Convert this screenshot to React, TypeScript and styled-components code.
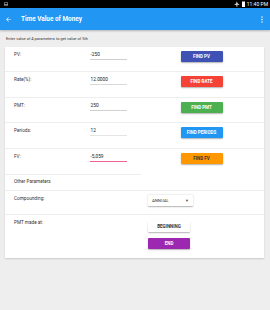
import React from "react";
import styled, { createGlobalStyle } from "styled-components";

const Global = createGlobalStyle`
  html, body { margin: 0; padding: 0; background: #eeeeee; }
  body { font-family: Roboto, "Liberation Sans", sans-serif; }
  * { box-sizing: border-box; }
`;

const Screen = styled.div`
  width: 270px;
  height: 310px;
  background: #eeeeee;
  display: flex;
  flex-direction: column;
  overflow: hidden;
`;

const StatusBar = styled.div`
  height: 8px;
  background: #000;
  display: flex;
  align-items: center;
  justify-content: space-between;
  padding: 0 2px 0 4px;
  color: #fff;
`;

const StatusRight = styled.div`
  display: flex;
  align-items: center;
  gap: 2px;
`;

const Clock = styled.span`
  font-size: 5px;
  line-height: 8px;
  color: #fff;
`;

const AppBar = styled.div`
  height: 22px;
  background: #2196f3;
  display: flex;
  align-items: center;
  padding: 0 7px 0 5px;
  box-shadow: 0 1px 2px rgba(0, 0, 0, 0.25);
  color: #fff;
`;

const Title = styled.div`
  font-size: 6.4px;
  font-weight: 700;
  margin-left: 9px;
  flex: 1;
`;

const Intro = styled.div`
  font-size: 4px;
  line-height: 6px;
  color: #333;
  padding: 6px 6px 5px;
`;

const Card = styled.div`
  margin: 0 6px 0 5px;
  background: #fff;
  box-shadow: 0 1px 1.5px rgba(0, 0, 0, 0.15);
  display: flex;
  flex-direction: column;
`;

const Row = styled.div<{ $h: number; $line?: boolean }>`
  height: ${(p) => p.$h}px;
  display: grid;
  grid-template-columns: 74px 40px 1fr;
  align-items: start;
  padding: 4px 9px 0;
  border-bottom: ${(p) => (p.$line === false ? "none" : "1px solid #eeeeee")};
`;

const ShortRow = styled(Row)`
  position: relative;
  &::after {
    content: "";
    position: absolute;
    left: 0;
    bottom: 0;
    width: 136px;
    height: 1px;
    background: #eeeeee;
  }
`;

const Label = styled.div<{ $lh?: number }>`
  font-size: 4.7px;
  line-height: ${(p) => p.$lh || 8}px;
  color: #333;
`;

const Input = styled.div<{ $line: string }>`
  justify-self: center;
  width: 37px;
  height: 9px;
  font-size: 4.8px;
  line-height: 8px;
  color: #222;
  padding-left: 1px;
  border-bottom: 1px solid ${(p) => p.$line};
`;

const Cell = styled.div<{ $align?: string }>`
  padding-left: 20px;
  display: flex;
  flex-direction: column;
  align-items: ${(p) => p.$align || "center"};
  gap: 6px;
`;

const Btn = styled.div<{ $bg: string; $fg?: string }>`
  width: 42px;
  height: 11px;
  background: ${(p) => p.$bg};
  color: ${(p) => p.$fg || "#fff"};
  font-size: 4.5px;
  font-weight: 700;
  display: flex;
  align-items: center;
  justify-content: center;
  border-radius: 1px;
  box-shadow: 0 1px 1.5px rgba(0, 0, 0, 0.3);
`;

const Select = styled.div`
  width: 45px;
  height: 11px;
  background: #fff;
  box-shadow: 0 0.5px 1.5px rgba(0, 0, 0, 0.3);
  border-radius: 1px;
  display: flex;
  align-items: center;
  justify-content: space-between;
  padding: 0 4px;
  font-size: 4.3px;
  color: #333;
`;

const Caret = styled.span`
  font-size: 4px;
  color: #555;
`;

const ModeButtons = styled(Cell)`
  padding-top: 2px;
  gap: 6px;
`;

const rows = [
  { label: "PV:", value: "-250", btn: "FIND PV", bg: "#3f51b5", h: 25, line: "#cfcfcf" },
  { label: "Rate(%):", value: "12.0000", btn: "FIND RATE", bg: "#f44336", h: 26, line: "#d8d8d8" },
  { label: "PMT:", value: "250", btn: "FIND PMT", bg: "#4caf50", h: 25, line: "#d0d0d0" },
  { label: "Periods:", value: "12", btn: "FIND PERIODS", bg: "#2196f3", h: 26, line: "#e4e4e4" },
];

export default function App() {
  return (
    <Screen>
      <Global />
      <StatusBar>
        <svg width="4" height="4" viewBox="0 0 4 4">
          <rect x="0.3" y="0.3" width="3.4" height="3.4" rx="0.5" fill="none" stroke="#ccc" strokeWidth="0.6" />
          <rect x="0.3" y="2" width="3.4" height="0.6" fill="#ccc" />
        </svg>
        <StatusRight>
          <svg width="6" height="6" viewBox="0 0 24 24">
            <path fill="#fff" d="M21 16v-2l-8-5V3.5a1.5 1.5 0 0 0-3 0V9l-8 5v2l8-2.5V19l-2 1.5V22l3.5-1 3.5 1v-1.5L13 19v-5.5z" />
          </svg>
          <svg width="3" height="6" viewBox="0 0 3 6">
            <rect x="0" y="0.5" width="3" height="5.5" fill="#fff" />
          </svg>
          <Clock>11:40 PM</Clock>
        </StatusRight>
      </StatusBar>
      <AppBar>
        <svg width="7" height="7" viewBox="0 0 24 24">
          <path fill="#fff" d="M20 11H7.83l5.59-5.59L12 4l-8 8 8 8 1.41-1.41L7.83 13H20v-2z" />
        </svg>
        <Title>Time Value of Money</Title>
        <svg width="2" height="7" viewBox="0 0 2 7">
          <circle cx="1" cy="1" r="0.75" fill="#fff" />
          <circle cx="1" cy="3.5" r="0.75" fill="#fff" />
          <circle cx="1" cy="6" r="0.75" fill="#fff" />
        </svg>
      </AppBar>
      <Intro>Enter value of 4 parameters to get value of 5th</Intro>
      <Card>
        {rows.map((r) => (
          <Row key={r.label} $h={r.h}>
            <Label>{r.label}</Label>
            <Input $line={r.line}>{r.value}</Input>
            <Cell>
              <Btn $bg={r.bg}>{r.btn}</Btn>
            </Cell>
          </Row>
        ))}
        <ShortRow $h={26} $line={false}>
          <Label>FV:</Label>
          <Input $line="#f06292">-5,059</Input>
          <Cell>
            <Btn $bg="#ff9800" $fg="#333">FIND FV</Btn>
          </Cell>
        </ShortRow>
        <Row $h={16}>
          <Label $lh={6}>Other Parameters</Label>
        </Row>
        <Row $h={24}>
          <Label>Compounding:</Label>
          <div />
          <Cell $align="flex-start">
            <Select>
              ANNUAL <Caret>▼</Caret>
            </Select>
          </Cell>
        </Row>
        <Row $h={43} $line={false}>
          <Label>PMT made at:</Label>
          <div />
          <ModeButtons $align="flex-start">
            <Btn $bg="#fff" $fg="#333">BEGINNING</Btn>
            <Btn $bg="#9c27b0">END</Btn>
          </ModeButtons>
        </Row>
      </Card>
    </Screen>
  );
}
